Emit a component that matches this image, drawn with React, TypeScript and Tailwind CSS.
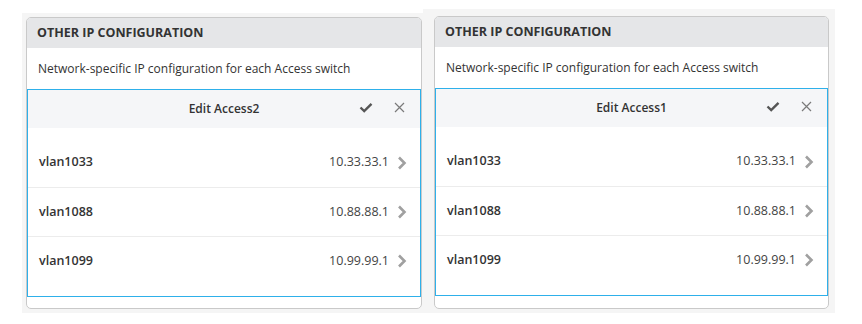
import React from "react";

const rows = [
  { name: "vlan1033", ip: "10.33.33.1" },
  { name: "vlan1088", ip: "10.88.88.1" },
  { name: "vlan1099", ip: "10.99.99.1" },
];

function Check() {
  return (
    <svg width="14" height="11" viewBox="0 0 14 11" fill="none">
      <path d="M1.5 5.5 L5.2 9 L12.5 1.8" stroke="#555" strokeWidth="2.4" strokeLinecap="butt" strokeLinejoin="miter" />
    </svg>
  );
}

function Close() {
  return (
    <svg width="11" height="11" viewBox="0 0 11 11" fill="none">
      <path d="M1 1 L10 10 M10 1 L1 10" stroke="#7a7a7a" strokeWidth="1.2" />
    </svg>
  );
}

function Chevron() {
  return (
    <svg width="10" height="14" viewBox="0 0 10 14" fill="none">
      <path d="M2 1.5 L7.5 7 L2 12.5" stroke="#a0a0a0" strokeWidth="2.6" />
    </svg>
  );
}

function Card({ title }: { title: string }) {
  return (
    <div className="flex h-full flex-col rounded-[5px] border border-[#c9c9c9] bg-white">
      <div className="flex h-[30px] items-center rounded-t-[4px] bg-[#e5e6e8] px-[10px] text-[12.5px] font-bold text-[#333]">
        OTHER IP CONFIGURATION
      </div>
      <div className="flex h-[41px] items-center px-[11px] text-[12px] text-[#333]">
        Network-specific IP configuration for each Access switch
      </div>
      <div className="flex h-[208px] flex-col border border-[#2eb0ea] bg-white">
        <div className="relative flex h-[38px] items-center justify-center bg-[#f5f6f8] text-[12px] font-semibold text-[#333]">
          {title}
          <div className="absolute right-[15px] top-[12px] flex items-center gap-[21px]">
            <Check />
            <Close />
          </div>
        </div>
        <div className="flex flex-col pt-[10px]">
          {rows.map((r, i) => (
            <div
              key={r.name}
              className={`flex h-[49px] items-center justify-between pl-[11px] pr-[13px] ${i > 0 ? "border-t border-[#ececec]" : ""}`}
            >
              <span className="text-[12.5px] font-semibold text-[#333]">{r.name}</span>
              <span className="flex items-center gap-[8px] text-[12.5px] text-[#444]">
                {r.ip}
                <Chevron />
              </span>
            </div>
          ))}
        </div>
      </div>
    </div>
  );
}

export default function App() {
  return (
    <div className="h-[324px] w-[862px] bg-white" style={{ fontFamily: '"Open Sans", "Noto Sans", sans-serif' }}>
      <div className="flex items-start">
        <div className="ml-[22px] mt-[13px] h-[300px] w-[401px] bg-[#f5f5f5] pl-[4px] pt-[4px]">
          <div className="h-[292px] w-[396px]">
            <Card title="Edit Access2" />
          </div>
        </div>
        <div className="mt-[9px] h-[304px] w-[412px] bg-[#f5f5f5] pl-[11px] pt-[7px]">
          <div className="h-[293px] w-[395px]">
            <Card title="Edit Access1" />
          </div>
        </div>
      </div>
    </div>
  );
}
